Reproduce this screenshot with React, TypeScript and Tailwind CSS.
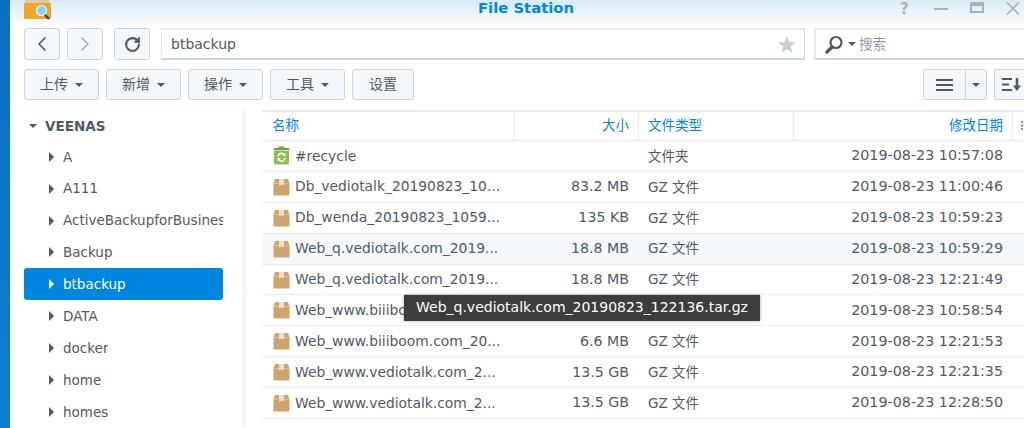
import React from 'react'
import { ChevronLeft, ChevronRight, RotateCw } from 'lucide-react'

const folders = ['A', 'A111', 'ActiveBackupforBusiness', 'Backup', 'btbackup', 'DATA', 'docker', 'home', 'homes']

const files = [
  { name: '#recycle', size: '', type: '文件夹', date: '2019-08-23 10:57:08', recycle: true },
  { name: 'Db_vediotalk_20190823_10...', size: '83.2 MB', type: 'GZ 文件', date: '2019-08-23 11:00:46' },
  { name: 'Db_wenda_20190823_1059...', size: '135 KB', type: 'GZ 文件', date: '2019-08-23 10:59:23' },
  { name: 'Web_q.vediotalk.com_2019...', size: '18.8 MB', type: 'GZ 文件', date: '2019-08-23 10:59:29', hover: true },
  { name: 'Web_q.vediotalk.com_2019...', size: '18.8 MB', type: 'GZ 文件', date: '2019-08-23 12:21:49' },
  { name: 'Web_www.biiiboom.com_20...', size: '6.6 MB', type: 'GZ 文件', date: '2019-08-23 10:58:54' },
  { name: 'Web_www.biiiboom.com_20...', size: '6.6 MB', type: 'GZ 文件', date: '2019-08-23 12:21:53' },
  { name: 'Web_www.vediotalk.com_2...', size: '13.5 GB', type: 'GZ 文件', date: '2019-08-23 12:21:35' },
  { name: 'Web_www.vediotalk.com_2...', size: '13.5 GB', type: 'GZ 文件', date: '2019-08-23 12:28:50' }
]

const Caret: React.FC<{ className?: string }> = ({ className }) => (
  <span className={`inline-block w-0 h-0 border-x-[4px] border-x-transparent border-t-[4px] ${className ?? 'border-t-[#505a64]'}`} />
)

const Arrow: React.FC<{ light?: boolean }> = ({ light }) => (
  <span className={`inline-block w-0 h-0 border-y-[5px] border-y-transparent border-l-[5px] ${light ? 'border-l-white' : 'border-l-[#505a64]'}`} />
)

const BoxIcon = () => (
  <svg width="17" height="18" viewBox="0 0 17 18" className="shrink-0">
    <path d="M0.5 5.5 L2 1 H15 L16.5 5.5 V17 a0.5 0.5 0 0 1 -0.5 0.5 H1 a0.5 0.5 0 0 1 -0.5 -0.5 Z" fill="#cfa36c" />
    <path d="M6 1 H11 V7.5 L8.5 6.5 L6 7.5 Z" fill="#f1dfc6" />
    <path d="M0.5 5.5 H6 M11 5.5 H16.5" stroke="#e3c7a2" strokeWidth="0.8" />
  </svg>
)

const RecycleIcon = () => (
  <svg width="17" height="19" viewBox="0 0 17 19" className="shrink-0">
    <rect x="5.5" y="0.5" width="6" height="2" rx="1" fill="#6f9f45" />
    <rect x="0.5" y="2" width="16" height="2" rx="1" fill="#6f9f45" />
    <path d="M1 4.5 H16 V17 a1.5 1.5 0 0 1 -1.5 1.5 H2.5 A1.5 1.5 0 0 1 1 17 Z" fill="#8cc152" />
    <path d="M5 10.5 a3.5 3.5 0 0 1 6 -2 M12 12 a3.5 3.5 0 0 1 -6 2" fill="none" stroke="#fff" strokeWidth="1.6" />
    <path d="M12.5 6.5 V10 H9 Z M4.5 15.5 V12 H8 Z" fill="#fff" />
  </svg>
)

const AppIcon = () => (
  <svg width="28" height="20" viewBox="0 0 28 20" className="shrink-0">
    <path d="M1 -2 H25 V3 H1 Z" fill="#d9c9b0" />
    <path d="M0 3 H27 V17.5 a1.5 1.5 0 0 1 -1.5 1.5 H1.5 A1.5 1.5 0 0 1 0 17.5 Z" fill="#f0a52d" />
    <path d="M19 13 L25 19" stroke="#2f4a5c" strokeWidth="2.4" />
    <circle cx="17.5" cy="10.5" r="5" fill="#7fd4f4" stroke="#e8f6fc" strokeWidth="1.2" />
  </svg>
)

const ToolButton: React.FC<{ label: string; caret?: boolean; width?: string }> = ({ label, caret = true, width = 'w-[75px]' }) => (
  <button className={`${width} h-[31px] flex items-center justify-center gap-[7px] rounded-[3px] border border-[#c9d6e2] bg-[#f4f7fa] text-[14px] text-[#505a64]`}>
    {label}
    {caret && <Caret />}
  </button>
)

const NavButton: React.FC<{ children: React.ReactNode }> = ({ children }) => (
  <button className="w-[36px] h-[32px] flex items-center justify-center rounded-[3px] border border-[#c9d6e2] bg-[#f4f7fa]">
    {children}
  </button>
)

const Toolbar = () => (
  <div className="shrink-0">
    <div className="h-[28px] pl-[14px] pr-[4px] flex bg-gradient-to-b from-[#d8ebf8] to-white">
      <div className="overflow-hidden h-[20px]"><AppIcon /></div>
      <div className="flex-1 text-center text-[14.8px] font-bold leading-[16px] text-[#0086e5] pl-[100px]">File Station</div>
      <div className="flex items-start gap-[22px] pt-[2px]">
        <span className="w-[12px] text-[15px] leading-[14px] font-bold text-[#a9b2ba]">?</span>
        <span className="w-[14px] h-[2px] mt-[6px] bg-[#a9b2ba]" />
        <span className="w-[14px] h-[11px] border-2 border-t-[4px] border-[#a9b2ba]" />
        <svg width="14" height="13" viewBox="0 0 14 13"><path d="M1 0.5 L13 12.5 M13 0.5 L1 12.5" stroke="#a9b2ba" strokeWidth="1.6" /></svg>
      </div>
    </div>
    <div className="h-[32px] pl-[14px] flex">
      <NavButton><ChevronLeft size={24} strokeWidth={1.7} color="#505a64" /></NavButton>
      <div className="ml-[7px]"><NavButton><ChevronRight size={24} strokeWidth={1.7} color="#a9b2ba" /></NavButton></div>
      <div className="ml-[11px]"><NavButton><RotateCw size={17} strokeWidth={3} color="#505a64" /></NavButton></div>
      <div className="ml-[11px] w-[644px] h-[32px] flex items-center justify-between pl-[9px] pr-[8px] border-2 border-r border-l border-t-[#e4eaf0] border-l-[#e4eaf0] border-r-[#c9d6e2] border-b-[#c9d6e2] text-[14px] text-[#505a64]">
        btbackup
        <svg width="18" height="17" viewBox="0 0 18 17"><path d="M9 0 L11.2 6.2 L18 6.4 L12.6 10.4 L14.6 17 L9 13 L3.4 17 L5.4 10.4 L0 6.4 L6.8 6.2 Z" fill="#c3cdd6" /></svg>
      </div>
      <div className="ml-[9px] flex-1 h-[32px] flex items-center pl-[9px] border-2 border-r-0 border-t-[#e4eaf0] border-l-[#e4eaf0] border-b-[#c9d6e2] text-[13.5px] text-[#8f99a3]">
        <svg width="19" height="19" viewBox="0 0 19 19"><circle cx="11" cy="7.5" r="5.5" fill="none" stroke="#505a64" strokeWidth="2.2" /><path d="M7 12 L2 17" stroke="#505a64" strokeWidth="3.2" strokeLinecap="round" /></svg>
        <span className="ml-[4px] mr-[3px] flex"><Caret /></span>
        搜索
      </div>
    </div>
    <div className="h-[31px] mt-[9px] pl-[14px] flex gap-[7px]">
      <ToolButton label="上传" />
      <ToolButton label="新增" />
      <ToolButton label="操作" />
      <ToolButton label="工具" />
      <ToolButton label="设置" caret={false} width="w-[62px]" />
      <div className="ml-auto flex gap-[7px] -mr-[10px]">
        <div className="w-[64px] h-[31px] flex rounded-[3px] border border-[#c9d6e2] bg-[#f4f7fa]">
          <div className="w-[42px] flex flex-col items-center justify-center gap-[3px] border-r border-[#c9d6e2]">
            <span className="w-[17px] h-[2px] bg-[#505a64]" />
            <span className="w-[17px] h-[2px] bg-[#505a64]" />
            <span className="w-[17px] h-[2px] bg-[#505a64]" />
          </div>
          <div className="flex-1 flex items-center justify-center"><Caret /></div>
        </div>
        <div className="w-[40px] h-[31px] pl-[7px] flex items-center rounded-l-[3px] border border-r-0 border-[#c9d6e2] bg-[#f4f7fa]">
          <svg width="19" height="13" viewBox="0 0 19 13"><path d="M0 1 H10 M0 6.5 H7 M0 12 H10" stroke="#505a64" strokeWidth="2" /><path d="M15 0 V8" stroke="#505a64" strokeWidth="2.6" /><path d="M11 7.5 H19 L15 13 Z" fill="#505a64" /></svg>
        </div>
      </div>
    </div>
  </div>
)

const Sidebar = () => (
  <div className="w-[234px] shrink-0 pl-[14px] pr-[20px] pt-[0.7px] border-r border-[#eef1f4] shadow-[1px_0_3px_rgba(90,110,130,0.12)]">
    <div className="h-[30px] flex items-center pl-[5px] gap-[8px] text-[13.5px] font-bold text-[#505a64]">
      <Caret />
      VEENAS
    </div>
    {folders.map(folder => {
      const selected = folder === 'btbackup'
      return (
        <div
          key={folder}
          className={`h-[31.95px] flex items-center pl-[25px] gap-[9px] rounded-[3px] overflow-hidden whitespace-nowrap text-[13.5px] ${selected ? 'bg-[#0086e0] text-white' : 'text-[#505a64]'}`}
        >
          <Arrow light={selected} />
          <span className="overflow-hidden">{folder}</span>
        </div>
      )
    })}
  </div>
)

const FileTable = () => (
  <div className="flex-1 pl-[18px] relative">
    <div className="h-[31px] flex border-t-2 border-b border-[#e6ecf2] text-[13.5px] leading-[27px] text-[#0086e5]">
      <div className="w-[253px] pl-[10px] border-r border-[#e6ecf2]">名称</div>
      <div className="w-[124px] pr-[9px] text-right border-r border-[#e6ecf2]">大小</div>
      <div className="w-[155px] pl-[9px] border-r border-[#e6ecf2]">文件类型</div>
      <div className="w-[219px] pr-[9px] text-right border-r border-[#e6ecf2]">修改日期</div>
      <div className="flex-1 pl-[8px] pt-[9px]">
        <svg width="5" height="9" viewBox="0 0 5 9"><path d="M0 1 H5 M0 4.5 H5 M0 8 H5" stroke="#0086e5" strokeWidth="1.6" strokeDasharray="2 1" /></svg>
      </div>
    </div>
    {files.map((file, i) => (
      <div
        key={i}
        className={`h-[30.9px] flex items-center border-b border-[#e6ecf2] text-[#505a64] ${file.hover ? 'bg-[#f5f9fc]' : ''}`}
      >
        <div className="w-[252px] pl-[11px] flex items-center gap-[5px] whitespace-nowrap overflow-hidden text-[13.85px]">
          {file.recycle ? <RecycleIcon /> : <BoxIcon />}
          <span>{file.name}</span>
        </div>
        <div className="w-[124px] pr-[9px] text-right text-[14.2px] whitespace-nowrap">{file.size}</div>
        <div className="w-[155px] pl-[10px] text-[13.5px]">{file.type}</div>
        <div className="w-[219px] pr-[9px] text-right whitespace-nowrap text-[14.3px]">{file.date}</div>
      </div>
    ))}
    <div className="absolute left-[160px] top-[185px] h-[26px] px-[12px] leading-[24px] whitespace-nowrap bg-[#3d3d3d] text-white text-[14px] shadow-[0_0_3px_rgba(0,0,0,0.35)]">
      Web_q.vediotalk.com_20190823_122136.tar.gz
    </div>
  </div>
)

export default function App() {
  return (
    <div className="w-[1024px] h-[428px] flex overflow-hidden bg-white font-['DejaVu_Sans','Noto_Sans_CJK_SC',sans-serif]">
      <div className="w-[10px] shrink-0 bg-gradient-to-b from-[#0a6fc4] to-[#0b7fd0]" />
      <div className="flex-1 min-w-0 flex flex-col">
        <Toolbar />
        <div className="flex-1 min-h-0 mt-[10px] flex">
          <Sidebar />
          <FileTable />
        </div>
      </div>
    </div>
  )
}
